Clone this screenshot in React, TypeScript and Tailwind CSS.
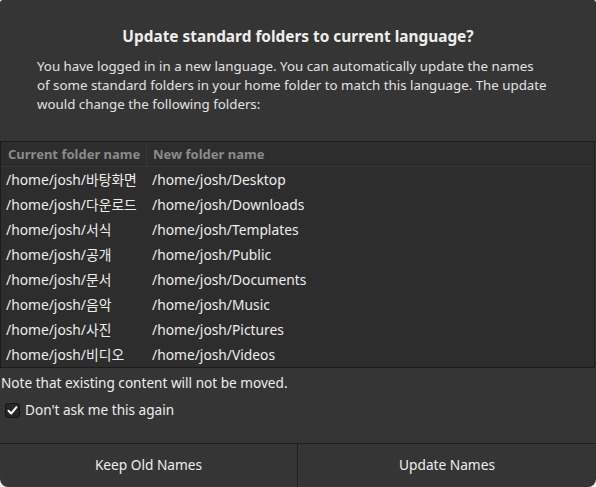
import React from "react";

const rows: [string, string][] = [
  ["/home/josh/바탕화면", "/home/josh/Desktop"],
  ["/home/josh/다운로드", "/home/josh/Downloads"],
  ["/home/josh/서식", "/home/josh/Templates"],
  ["/home/josh/공개", "/home/josh/Public"],
  ["/home/josh/문서", "/home/josh/Documents"],
  ["/home/josh/음악", "/home/josh/Music"],
  ["/home/josh/사진", "/home/josh/Pictures"],
  ["/home/josh/비디오", "/home/josh/Videos"],
];

export default function App() {
  return (
    <div
      className="w-[596px] h-[487px] bg-[#f6f5f4] text-[#eeeeec]"
      style={{ fontFamily: '"Noto Sans", "Noto Sans CJK KR", sans-serif' }}
    >
      <div className="w-full h-full bg-[#353535] rounded-t-[3px] rounded-b-[8px] overflow-hidden flex flex-col">
        <div className="pt-[27px] px-[37px]">
          <div className="text-center text-[15.4px] leading-[20px] font-bold whitespace-nowrap">
            Update standard folders to current language?
          </div>
          <div className="mt-[10px] text-[13.3px] leading-[19px] text-[#e3e3e1] whitespace-nowrap">
            You have logged in in a new language. You can automatically update the names
            <br />
            of some standard folders in your home folder to match this language. The update
            <br />
            would change the following folders:
          </div>
        </div>
        <div className="mt-[27px] mr-[1px] border border-[#1c1c1c] bg-[#2d2d2d] text-[13.8px]">
          <div className="flex h-[25px] border-b border-[#383838] font-bold text-[#8b8b8a] text-[13px]">
            <div className="w-[146px] border-r border-[#383838] pl-[7px] leading-[24px] whitespace-nowrap">Current folder name</div>
            <div className="pl-[6px] leading-[24px] whitespace-nowrap">New folder name</div>
          </div>
          {rows.map(([a, b]) => (
            <div key={a} className="flex h-[25px] leading-[25px] whitespace-nowrap">
              <div className="w-[146px] pl-[5px]">{a}</div>
              <div className="pl-[5px]">{b}</div>
            </div>
          ))}
        </div>
        <div className="mt-[5px] text-[13.6px] leading-[20px] pl-[1px]">
          Note that existing content will not be moved.
        </div>
        <div className="mt-[7px] flex items-center h-[20px] pl-[5px] text-[13.6px]">
          <div className="w-[15px] h-[15px] rounded-[3px] border border-[#151515] bg-[#262626] flex items-center justify-center">
            <svg width="11" height="11" viewBox="0 0 11 11">
              <path d="M1.5 5.8 L4.2 8.5 L9.5 2.2" stroke="#ffffff" strokeWidth="2" fill="none" strokeLinecap="round" strokeLinejoin="round" />
            </svg>
          </div>
          <span className="ml-[5px]">Don't ask me this again</span>
        </div>
        <div className="mt-auto flex h-[44px] border-t border-[#1f1f1f] text-[13.7px]">
          <div className="w-[298px] border-r border-[#1f1f1f] flex items-center justify-center">Keep Old Names</div>
          <div className="flex-1 flex items-center justify-center">Update Names</div>
        </div>
      </div>
    </div>
  );
}
